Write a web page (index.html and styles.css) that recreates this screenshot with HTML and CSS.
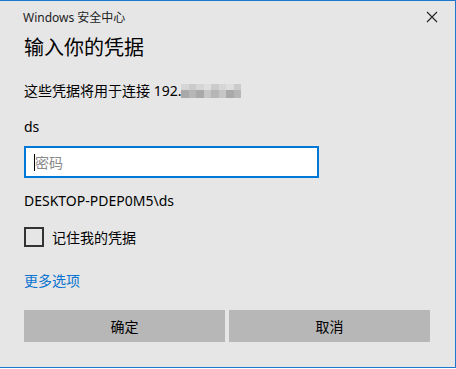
FILE: index.html
```html
<!DOCTYPE html>
<html lang="zh-CN">
<head>
  <meta charset="UTF-8">
  <title>Windows 安全中心</title>
  <link rel="stylesheet" href="styles.css">
</head>
<body>
  <div class="window">
    <div class="titlebar">
      <span class="app-name">Windows 安全中心</span>
      <svg class="close" width="12" height="12" viewBox="0 0 12 12">
        <path d="M1 1 L11 11 M11 1 L1 11" stroke="#222" stroke-width="1.1" fill="none"/>
      </svg>
    </div>
    <div class="content">
      <h1>输入你的凭据</h1>
      <p class="target">这些凭据将用于连接 192.<span class="blur">
        <i class="s1"></i><i class="s2"></i><i class="s1"></i><i class="s3"></i><i class="s2"></i><i class="s1"></i><i class="s3"></i><i class="s2"></i>
        <i class="d1"></i><i class="d2"></i><i class="d1"></i><i class="d3"></i><i class="d2"></i><i class="d3"></i><i class="d1"></i><i class="d2"></i>
      </span></p>
      <p class="user">ds</p>
      <div class="field"><span class="caret"></span><input type="password" placeholder="密码"></div>
      <p class="domain">DESKTOP-PDEP0M5\ds</p>
      <label class="remember"><span class="box"></span>记住我的凭据</label>
      <a class="more" href="#">更多选项</a>
      <div class="buttons">
        <button>确定</button>
        <button>取消</button>
      </div>
    </div>
  </div>
</body>
</html>
```

FILE: styles.css
```css
body {
  margin: 0;
  background: #fff;
  font-family: "Segoe UI", "Noto Sans", "Noto Sans CJK SC", sans-serif;
  color: #000;
}

.window {
  width: 456px;
  height: 368px;
  box-sizing: border-box;
  background: #e6e6e6;
  border: 1px solid #1a79cc;
  border-left: none;
}

.titlebar {
  display: flex;
  justify-content: space-between;
  align-items: center;
  height: 32px;
  padding: 0 17px 0 23px;
  box-sizing: border-box;
}

.app-name {
  font-size: 12px;
  color: #222;
}

.content {
  padding: 0 24px;
  display: flex;
  flex-direction: column;
  align-items: flex-start;
}

h1 {
  font-size: 20px;
  font-weight: normal;
  line-height: 28px;
  margin: 1px 0 0;
}

p {
  margin: 0;
  font-size: 14px;
  line-height: 20px;
}

.target {
  margin-top: 19px;
  display: flex;
  align-items: center;
}

.blur {
  display: grid;
  grid-template-columns: repeat(8, 7.5px);
  grid-template-rows: 6px 8px;
}

.blur i { display: block; }
.s1 { background: #d6d6d6; }
.s2 { background: #cbcbcb; }
.s3 { background: #dedede; }
.d1 { background: #a9a9a9; }
.d2 { background: #b6b6b6; }
.d3 { background: #c6c6c6; }

.user {
  margin-top: 16px;
}

.field {
  position: relative;
  margin-top: 9px;
  width: 295px;
  height: 32px;
  box-sizing: border-box;
  border: 2px solid #0078d7;
  background: #fff;
}

.field input {
  width: 100%;
  height: 100%;
  box-sizing: border-box;
  border: none;
  outline: none;
  padding: 0 0 0 9px;
  font: inherit;
  font-size: 14px;
  background: transparent;
}

.field input::placeholder {
  color: #8a8a8a;
}

.caret {
  position: absolute;
  left: 8px;
  top: 6px;
  width: 1px;
  height: 17px;
  background: #000;
}

.domain {
  margin-top: 13px;
}

.remember {
  display: flex;
  align-items: center;
  gap: 8px;
  margin-top: 16px;
  font-size: 14px;
}

.box {
  width: 20px;
  height: 20px;
  box-sizing: border-box;
  border: 2px solid #333;
}

.more {
  margin-top: 24px;
  font-size: 14px;
  line-height: 20px;
  color: #0a74d0;
  text-decoration: none;
}

.buttons {
  display: flex;
  gap: 4px;
  margin-top: 19px;
}

button {
  width: 201px;
  height: 32px;
  border: none;
  background: #b7b7b7;
  font: inherit;
  font-size: 14px;
  color: #000;
  padding: 0;
}
```
